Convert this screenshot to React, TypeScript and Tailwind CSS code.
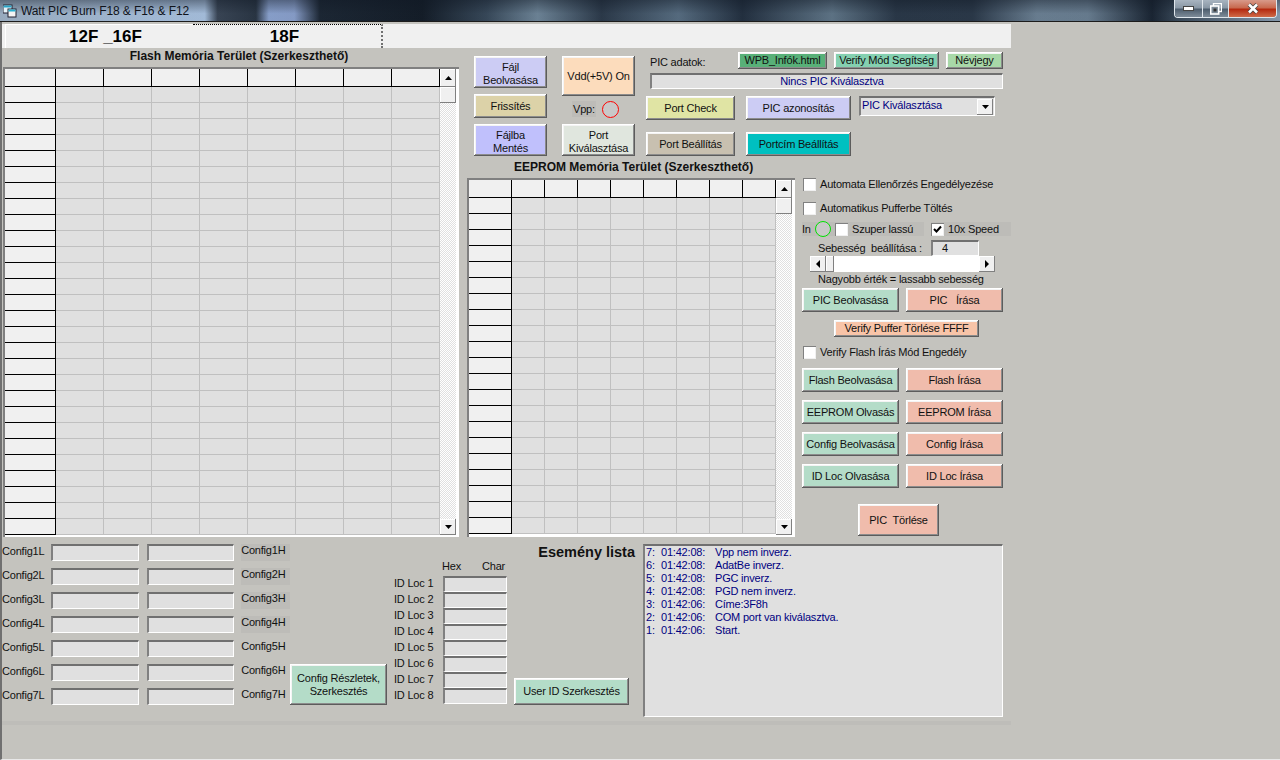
const sans = "font-['Liberation_Sans',Arial,sans-serif]"

const bevel = 'shadow-[inset_-1px_-1px_0_#5c5c5c,inset_1px_1px_0_#fff,inset_-2px_-2px_0_#8c8c8c,inset_2px_2px_0_#f4f4f4]'
const sunken = 'border-t-2 border-l-2 border-b border-r border-t-[#707070] border-l-[#808080] border-b-white border-r-white'
const labelText = 'text-[11px] tracking-[-0.2px] text-[#111]'

function Btn({ label, className }: { label: string; className: string }) {
  return (
    <div className={`flex items-center justify-center text-center leading-[13px] whitespace-pre shrink-0 ${labelText} ${bevel} ${className}`}>
      {label}
    </div>
  )
}

function Arrow({ dir }: { dir: 'up' | 'down' | 'left' | 'right' }) {
  const pts = {
    up: '0,4 7,4 3.5,0',
    down: '0,0 7,0 3.5,4',
    left: '4,0 4,8 0,4',
    right: '0,0 0,8 4,4',
  }[dir]
  const wide = dir === 'up' || dir === 'down'
  return (
    <svg width={wide ? 7 : 4} height={wide ? 4 : 8}>
      <polygon points={pts} fill="#000" />
    </svg>
  )
}

function ScrollBtn({ dir, className }: { dir: 'up' | 'down' | 'left' | 'right'; className: string }) {
  return (
    <div className={`flex items-center justify-center bg-[#f0f0f0] shrink-0 shadow-[inset_-1px_-1px_0_#808080,inset_1px_1px_0_#fff] ${className}`}>
      <Arrow dir={dir} />
    </div>
  )
}

function VScroll() {
  return (
    <div className="w-4 flex flex-col">
      <ScrollBtn dir="up" className="h-[18px]" />
      <div className="h-4 bg-[#f0f0f0] shadow-[inset_-1px_-1px_0_#808080,inset_1px_1px_0_#fff]" />
      <div className="flex-1 bg-[repeating-conic-gradient(#fff_0_25%,#e0e0e0_0_50%)] bg-[length:2px_2px]" />
      <ScrollBtn dir="down" className="h-4" />
    </div>
  )
}

function MemoryGrid({ rows, cols, head, cell, className }: { rows: number; cols: number; head: string; cell: string; className: string }) {
  return (
    <div className={`flex shrink-0 bg-white border-t-2 border-l-2 border-t-[#808080] border-l-[#808080] pr-[3px] pb-[2px] ${className}`}>
      <div className="flex flex-col">
        <div className="flex h-[18px]">
          <div className={`${head} bg-[#f0f0f0] border-r border-b border-black`} />
          {Array.from({ length: cols }, (_, i) => (
            <div key={i} className={`${cell} bg-[#f0f0f0] border-r border-b border-black`} />
          ))}
        </div>
        {Array.from({ length: rows }, (_, r) => (
          <div key={r} className="flex h-4">
            <div className={`${head} bg-[#f0f0f0] border-r border-b border-black`} />
            {Array.from({ length: cols }, (_, i) => (
              <div key={i} className={`${cell} bg-[#e0e0e0] border-r border-b border-[#c0c0c0]`} />
            ))}
          </div>
        ))}
      </div>
      <VScroll />
    </div>
  )
}

function Check({ label, checked, className }: { label: string; checked?: boolean; className?: string }) {
  return (
    <div className={`flex items-center h-[13px] ${className ?? ''}`}>
      <div className="w-[13px] h-[13px] bg-white shrink-0 flex items-center justify-center shadow-[inset_1px_1px_0_#808080,inset_-1px_-1px_0_#f0f0f0]">
        {checked && (
          <svg width="9" height="9" viewBox="0 0 9 9">
            <path d="M1 4 L3.5 6.5 L8 1.5" fill="none" stroke="#000" strokeWidth="2" />
          </svg>
        )}
      </div>
      <span className={`ml-[4px] whitespace-nowrap leading-[13px] ${labelText}`}>{label}</span>
    </div>
  )
}

function TitleBar() {
  return (
    <div className="relative h-[21px] flex shrink-0 bg-[linear-gradient(180deg,rgba(16,24,36,0.45)_0%,rgba(16,24,36,0.05)_65%),linear-gradient(90deg,#9fb2c6_0%,#a8c0dc_12%,#a9c2e0_16%,#3a4656_17%,#2a3644_20%,#8ca4d0_21%,#8aa0cc_23%,#1c2734_25%,#141d28_33%,#38495a_38%,#6f8699_42%,#2c3a4a_47%,#586e82_53%,#233040_58%,#607688_65%,#2a3848_70%,#2b3949_76%,#6c8194_81%,#6a7f92_85%,#1a2533_90%,#3a4a5a_92%,#8a9eb2_100%)]">
      <div className="flex items-center pl-[3px]">
        <svg width="14" height="14" viewBox="0 0 14 14">
          <rect x="0" y="1" width="9" height="8" fill="#e8f4fa" stroke="#223" strokeWidth="1" />
          <rect x="0.5" y="1.5" width="8" height="2" fill="#2aa5c8" />
          <rect x="5" y="5" width="8" height="8" fill="#f4f4f4" stroke="#223" strokeWidth="1" />
          <rect x="5.5" y="5.5" width="7" height="2" fill="#28b0d0" />
        </svg>
        <span className="ml-[4px] text-[12px] tracking-[-0.1px] text-[#10131a] whitespace-nowrap">Watt PIC Burn F18 &amp; F16 &amp; F12</span>
      </div>
      {/* ablak gombok */}
      <div className="ml-auto mr-[3px] flex h-[18px] border border-t-0 border-[#dfe6ec] rounded-b-[4px] overflow-hidden">
        <div className="w-7 flex items-center justify-center bg-[linear-gradient(#a8b4c0_0%,#8a98a6_45%,#4e5e6e_55%,#7d8b98_100%)] border-r border-[#dfe6ec]">
          <div className="w-[11px] h-[5px] bg-white border border-[#444]" />
        </div>
        <div className="w-[26px] flex items-center justify-center bg-[linear-gradient(#a8b4c0_0%,#8a98a6_45%,#4e5e6e_55%,#7d8b98_100%)] border-r border-[#dfe6ec]">
          <svg width="12" height="12" viewBox="0 0 12 12">
            <rect x="3.5" y="0.5" width="8" height="8" fill="none" stroke="#fff" strokeWidth="1.4" />
            <rect x="0.7" y="3" width="8" height="8" fill="#7d8b98" stroke="#fff" strokeWidth="1.6" />
            <rect x="3.5" y="5.5" width="3" height="3" fill="#333" />
          </svg>
        </div>
        <div className="w-[47px] flex items-center justify-center bg-[linear-gradient(#d89a8a_0%,#c86a50_45%,#b52a10_55%,#cf6a48_100%)]">
          <svg width="12" height="11" viewBox="0 0 12 11">
            <path d="M2 1.5 L10 9.5 M10 1.5 L2 9.5" stroke="#444" strokeWidth="4" />
            <path d="M2 1.5 L10 9.5 M10 1.5 L2 9.5" stroke="#fff" strokeWidth="2.6" />
          </svg>
        </div>
      </div>
    </div>
  )
}

function Tabs() {
  return (
    <div className="mt-[2px] h-6 w-[1009px] bg-[#f0f0f0] flex pl-[3px] shrink-0 font-bold text-[17px] leading-[24px] text-black">
      <div className="w-[188px] text-center pl-[12px] border-t border-l border-white">12F _16F</div>
      <div className="w-[190px] text-center pr-[5px] border-t border-dotted border-black border-r-2 border-r-[#707070]">18F</div>
    </div>
  )
}

const configRows = [1, 2, 3, 4, 5, 6, 7]
const idRows = [1, 2, 3, 4, 5, 6, 7, 8]
const events = [
  ['7:', '01:42:08:', 'Vpp nem inverz.'],
  ['6:', '01:42:08:', 'AdatBe inverz.'],
  ['5:', '01:42:08:', 'PGC inverz.'],
  ['4:', '01:42:08:', 'PGD nem inverz.'],
  ['3:', '01:42:06:', 'Címe:3F8h'],
  ['2:', '01:42:06:', 'COM port van kiválasztva.'],
  ['1:', '01:42:06:', 'Start.'],
]

function ButtonsTop() {
  return (
    <div className="flex pl-[7px] h-[109px] pt-2">
      <div className="w-[73px] flex flex-col gap-[6px]">
        <Btn label={'Fájl\nBeolvasása'} className="h-8 pt-[4px] bg-[#ccccf4]" />
        <Btn label="Frissítés" className="h-6 bg-[#dcd2a8]" />
        <Btn label={'Fájlba\nMentés'} className="h-8 pt-[4px] bg-[#c0c0fc]" />
      </div>
      <div className="ml-[15px] w-[73px] flex flex-col">
        <Btn label="Vdd(+5V) On" className="h-10 bg-[#fcdcbc]" />
        <div className="h-7 flex items-center pl-[10px] pb-[2px]">
          <span className={`leading-[16px] px-px bg-[#bdbcb8] ${labelText}`}>Vpp:</span>
          <div className="ml-[6px] w-[17px] h-[17px] rounded-full border-[1.5px] border-[#ff0000] bg-[#c8c8c8]" />
        </div>
        <Btn label={'Port\nKiválasztása'} className="h-8 pt-[4px] bg-[#e0e6de]" />
      </div>
      <div className="ml-[11px] w-[357px] flex flex-col">
        <div className="flex items-center h-[17px] -mt-[4px] pl-[4px]">
          <span className={`w-[88px] mt-[3px] ${labelText}`}>PIC adatok:</span>
          <Btn label="WPB_Infók.html" className="h-[17px] w-[89px] bg-[#58b078]" />
          <Btn label="Verify Mód Segítség" className="ml-[7px] h-[17px] w-[105px] bg-[#84d0b0]" />
          <Btn label="Névjegy" className="ml-[7px] h-[17px] w-[57px] bg-[#a8d8a8]" />
        </div>
        <div className={`ml-[4px] mt-[4px] h-4 w-[353px] pl-[10px] bg-[#e0e0e0] text-[11px] tracking-[-0.2px] leading-[13px] text-center text-[#000080] ${sunken}`}>Nincs PIC Kiválasztva</div>
        <div className="flex mt-[7px]">
          <Btn label="Port Check" className="h-6 w-[89px] bg-[#e0e4a4]" />
          <Btn label="PIC azonosítás" className="ml-[11px] h-6 w-[105px] bg-[#ccccf4]" />
          <div className={`ml-2 h-5 w-[136px] bg-[#e0e0e0] flex items-center justify-between text-[11px] tracking-[-0.2px] text-[#000080] pl-[1px] pr-[1px] ${sunken}`}>
            <span className="-mt-[2px]">PIC Kiválasztása</span>
            <ScrollBtn dir="down" className="w-4 h-4" />
          </div>
        </div>
        <div className="flex mt-3">
          <Btn label="Port Beállítás" className="h-6 w-[89px] bg-[#c8c0b0]" />
          <Btn label="Portcím Beállítás" className="ml-[11px] h-6 w-[105px] bg-[#00c0c0]" />
        </div>
      </div>
    </div>
  )
}

function Controls() {
  return (
    <div className={`ml-[7px] w-[201px] flex flex-col ${labelText}`}>
      <Check label="Automata Ellenőrzés Engedélyezése" className="pl-px" />
      <Check label="Automatikus Pufferbe Töltés" className="pl-px mt-[11px]" />
      <div className="flex items-center h-[14px] mt-[7px] w-[209px] leading-[13px]">
        <div className="flex items-center w-[122px] h-[14px] bg-[#bdbcb8]">
          <span className="w-[13px]">In</span>
          <div className="w-4 h-4 rounded-full border-[1.5px] border-[#00e000] bg-[#c8c8c8] shrink-0" />
          <Check label="Szuper lassú" className="ml-[4px]" />
        </div>
        <div className="ml-[7px] flex-1 h-[14px] flex items-center bg-[#bdbcb8]">
          <Check label="10x Speed" checked />
        </div>
      </div>
      <div className="flex mt-[4px] h-4 pl-4 items-center leading-[13px]">
        <span className="w-[113px] whitespace-pre">Sebesség  beállítása :</span>
        <div className={`w-12 h-4 bg-[#e0e0e0] leading-[13px] pl-[9px] ${sunken}`}>4</div>
      </div>
      <div className="flex ml-2 w-[185px] h-4 bg-white">
        <ScrollBtn dir="left" className="w-4" />
        <div className="w-[8px] bg-[#f0f0f0] shadow-[inset_-1px_-1px_0_#808080,inset_1px_1px_0_#fff]" />
        <div className="flex-1" />
        <ScrollBtn dir="right" className="w-4" />
      </div>
      <div className="pl-4 h-4 leading-[14px] whitespace-nowrap">Nagyobb érték = lassabb sebesség</div>
      <div className="flex gap-[7px]">
        <Btn label="PIC Beolvasása" className="w-[97px] h-6 bg-[#b4dcc8]" />
        <Btn label="PIC   Írása" className="w-[97px] h-6 bg-[#f0bcac]" />
      </div>
      <Btn label="Verify Puffer Törlése FFFF" className="ml-8 mt-2 w-[145px] h-[17px] bg-[#f8c4a8]" />
      <Check label="Verify Flash Írás Mód Engedély" className="pl-px mt-[9px]" />
      <div className="mt-[9px] flex flex-col gap-2">
        {[
          ['Flash Beolvasása', 'Flash Írása'],
          ['EEPROM Olvasás', 'EEPROM Írása'],
          ['Config Beolvasása', 'Config Írása'],
          ['ID Loc Olvasása', 'ID Loc Írása'],
        ].map(([a, b]) => (
          <div key={a} className="flex gap-[7px]">
            <Btn label={a} className="w-[97px] h-6 bg-[#b4dcc8]" />
            <Btn label={b} className="w-[97px] h-6 bg-[#f0bcac]" />
          </div>
        ))}
      </div>
      <Btn label="PIC  Törlése" className="ml-14 mt-[16px] w-[81px] h-8 bg-[#f0bcac]" />
    </div>
  )
}

function BottomPanel() {
  return (
    <div className={`flex mt-[7px] h-[173px] leading-[14px] ${labelText}`}>
      <div className="w-[288px] flex flex-col gap-[7px]">
        {configRows.map(n => (
          <div key={n} className="flex items-center h-[17px]">
            <span className="w-[49px] pb-[3px]">Config{n}L</span>
            <div className={`w-[88px] h-[17px] bg-[#e0e0e0] ${sunken}`} />
            <div className={`ml-2 w-[88px] h-[17px] bg-[#e0e0e0] ${sunken}`} />
            <span className={`ml-[7px] w-[49px] h-[17px] leading-[13px] ${n < 5 ? 'bg-[#bdbcb8]' : ''}`}>Config{n}H</span>
          </div>
        ))}
      </div>
      <Btn label={'Config Részletek,\nSzerkesztés'} className="w-[97px] h-[41px] mt-[120px] bg-[#b4dcc8]" />
      <div className="ml-[7px] w-[113px] pt-[16px]">
        <div className="h-4 pl-[48px] flex leading-[12px]">
          <span className="w-10">Hex</span>
          <span>Char</span>
        </div>
        {idRows.map(n => (
          <div key={n} className="flex items-center h-4">
            <span className="w-[49px] pb-[2px]">ID Loc {n}</span>
            <div className={`w-[64px] h-4 bg-[#e0e0e0] ${sunken}`} />
          </div>
        ))}
      </div>
      <div className="ml-[7px] w-[121px] flex flex-col">
        <div className="text-right font-bold text-[14.5px] tracking-normal leading-4">Esemény lista</div>
        <Btn label="User ID Szerkesztés" className="w-[115px] h-[27px] mt-auto mb-3 bg-[#b4dcc8]" />
      </div>
      <div className={`ml-2 w-[360px] bg-[#e0e0e0] pl-[1px] text-[#000080] leading-[13px] ${sunken}`}>
        {events.map(([n, t, m]) => (
          <div key={n} className="flex whitespace-nowrap">
            <span className="w-[15px]">{n}</span>
            <span className="w-[54px]">{t}</span>
            <span>{m}</span>
          </div>
        ))}
      </div>
    </div>
  )
}

export default function App() {
  return (
    <div className={`w-[1280px] h-[760px] overflow-hidden flex flex-col bg-[#c4c3be] ${sans}`}>
      <TitleBar />
      <div className="h-px bg-[#1c1c1c] shrink-0" />
      <div className="flex-1 flex flex-col border-l-2 border-l-[#707070] border-b border-b-[#e8e8e8]">
        <Tabs />
        <div className="flex pl-px">
          <div className="w-[456px]">
            <div className="h-[19px] pl-4 text-center font-bold text-[12px] leading-[17px] text-[#111]">Flash Memória Terület (Szerkeszthető)</div>
            <MemoryGrid rows={28} cols={8} head="w-[51px]" cell="w-12" className="w-[456px] h-[470px]" />
          </div>
          <div className="ml-2 w-[536px]">
            <ButtonsTop />
            <div className="h-[21px] pl-[47px] font-bold text-[12px] leading-5 text-[#111]">EEPROM Memória Terület (Szerkeszthető)</div>
            <div className="flex">
              <MemoryGrid rows={21} cols={8} head="w-[43px]" cell="w-[33px]" className="w-[328px] h-[359px]" />
              <Controls />
            </div>
          </div>
        </div>
        <BottomPanel />
        <div className="mt-1 h-1 w-[1009px] bg-[#bebdb9]" />
      </div>
    </div>
  )
}
